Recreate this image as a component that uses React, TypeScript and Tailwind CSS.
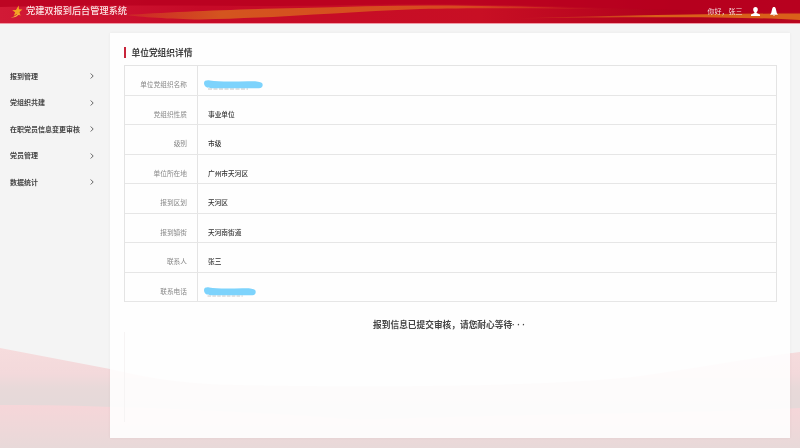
const fontStack = "font-['Liberation_Sans','Noto_Sans_CJK_SC',sans-serif]";

const menus = ['报到管理', '党组织共建', '在职党员信息变更审核', '党员管理', '数据统计'];

const rows = [
  { label: '单位党组织名称', value: '', mask: 59 },
  { label: '党组织性质', value: '事业单位' },
  { label: '级别', value: '市级' },
  { label: '单位所在地', value: '广州市天河区' },
  { label: '报到区划', value: '天河区' },
  { label: '报到镇街', value: '天河南街道' },
  { label: '联系人', value: '张三' },
  { label: '联系电话', value: '', mask: 52 },
];

function HeaderArt() {
  return (
    <svg className="absolute inset-0 h-full w-full" viewBox="0 0 800 23" preserveAspectRatio="none">
      <defs>
        <linearGradient id="band" x1="0" x2="1" y1="0" y2="0">
          <stop offset="0" stopColor="#d11a36" />
          <stop offset="0.25" stopColor="#c60a28" />
          <stop offset="0.6" stopColor="#c80f24" />
          <stop offset="0.85" stopColor="#b0001c" />
          <stop offset="1" stopColor="#b8061f" />
        </linearGradient>
        <linearGradient id="swoosh" x1="0" x2="1" y1="0" y2="0">
          <stop offset="0" stopColor="#d4551f" stopOpacity="0.3" />
          <stop offset="0.2" stopColor="#d4551f" />
          <stop offset="0.7" stopColor="#d9501f" stopOpacity="0.9" />
          <stop offset="1" stopColor="#d9501f" stopOpacity="0" />
        </linearGradient>
        <linearGradient id="swoosh2" x1="0" x2="1" y1="0" y2="0">
          <stop offset="0" stopColor="#d9601a" stopOpacity="0" />
          <stop offset="0.5" stopColor="#d9601a" />
          <stop offset="1" stopColor="#d9601a" />
        </linearGradient>
      </defs>
      <rect width="800" height="23" fill="url(#band)" />
      <path d="M0 0H800V12C700 11 640 9 560 6.500C470 4 400 4 330 5.500C230 7 120 4 0 7Z" fill="#b8001f" opacity="0.8" />
      <path d="M125 15C170 12 240 9 300 8C350 6.500 400 5 450 5.500C510 6 570 8 610 9.500C540 8 470 8 420 9C340 12 280 18 200 19.500C170 19 140 17 125 15Z" fill="url(#swoosh)" />
      <path d="M513 18.500C610 16 710 13.500 800 13.500V20C740 16.500 630 16.500 513 18.500Z" fill="url(#swoosh2)" />
    </svg>
  );
}

function BackgroundArt() {
  return (
    <svg className="absolute inset-x-0 bottom-0 h-[100px] w-full" viewBox="0 0 800 100" preserveAspectRatio="none">
      <defs>
        <linearGradient id="waveTop" gradientUnits="userSpaceOnUse" x1="0" x2="0" y1="0" y2="57">
          <stop offset="0" stopColor="#f6dcdd" />
          <stop offset="0.45" stopColor="#f3d9db" />
          <stop offset="0.7" stopColor="#e8d9d9" />
          <stop offset="1" stopColor="#e5d9d9" />
        </linearGradient>
        <linearGradient id="waveBottom" gradientUnits="userSpaceOnUse" x1="0" x2="0" y1="57" y2="100">
          <stop offset="0" stopColor="#f6d6d9" />
          <stop offset="1" stopColor="#e8d9d9" />
        </linearGradient>
      </defs>
      <path d="M0 0L110 21C150 30 180 36 240 37C380 40 560 38 640 28C700 20 750 10 800 4V100H0Z" fill="url(#waveTop)" />
      <path d="M0 57C60 56 240 62 360 72C500 66 680 66 800 60V100H0Z" fill="url(#waveBottom)" />
    </svg>
  );
}

function Mask({ width }: { width: number }) {
  return (
    <svg className="absolute left-[6px] top-[14px]" width={width} height="11" viewBox="0 0 59 11" preserveAspectRatio="none">
      <path d="M4 9H44" stroke="#c4c4c4" strokeWidth="1" strokeDasharray="4 1.500" />
      <path d="M0 3C0 .5 3 0 6 .500C14 1.800 30 1.500 44 1.200C50 1 56 1.200 58 3C59.500 5 58.500 8 55 8.200C42 8.500 24 8.200 8 8.200C3 8.200 0 6.500 0 3Z" fill="#7dd3fc" />
    </svg>
  );
}

export default function App() {
  return (
    <div className={`relative flex h-[448px] w-[800px] flex-col overflow-hidden bg-[#f4f4f4] blur-[0.4px] ${fontStack}`}>
      <BackgroundArt />

      <header className="relative flex h-[24px] shrink-0 items-center justify-between border-b border-[#ef9aa5] pl-[10px] pr-[22.500px]">
        <HeaderArt />
        <div className="relative flex items-center gap-[3px]">
          <svg width="13" height="13" viewBox="0 0 24 24">
            <path d="M16 1L16.500 8L23 8.500L17.500 13L19.500 20L13.500 16L7 20L9.500 13.500L4 9.500L11 9Z" fill="#f3a323" />
            <path d="M1 23C7 22 12 19 15 15L17 17C13 21 8 24 1 23Z" fill="#f5b93e" />
          </svg>
          <span className="text-[9.200px] font-medium leading-none text-[#fbe4e4]">党建双报到后台管理系统</span>
        </div>
        <div className="relative flex items-center text-white">
          <span className="text-[7px] leading-none text-[#f6dede]">你好，张三</span>
          <svg className="ml-[8px]" width="9" height="9" viewBox="0 0 9 9" fill="currentColor">
            <path d="M4.500 0C6 0 6.800 1 6.800 2.500C6.800 3.800 6.100 4.700 5.600 5.200V5.900L9 7.600V9H0V7.600L3.400 5.900V5.200C2.900 4.700 2.200 3.800 2.200 2.500C2.200 1 3 0 4.500 0Z" />
          </svg>
          <svg className="ml-[10px]" width="8" height="9" viewBox="0 0 8 9" fill="currentColor">
            <path d="M4 0C5 0 5.500 .6 5.800 1.800L6.800 6L8 7.800H0L1.200 6L2.200 1.800C2.500 .6 3 0 4 0Z" />
            <path d="M2.800 8.200H5.200L4 9Z" />
          </svg>
        </div>
      </header>

      <div className="relative flex min-h-0 flex-1">
        <aside className="w-[110px] shrink-0 pl-[10px] pr-[16px] pt-[39px]">
          {menus.map((item) => (
            <div key={item} className="flex h-[26.500px] items-center justify-between text-[7px] leading-none text-[#444444]">
              <span className="font-bold">{item}</span>
              <svg width="4" height="6" viewBox="0 0 4 6" fill="none" stroke="#666666" strokeWidth="1">
                <path d="M0.700 0.500L3.200 3L0.700 5.500" />
              </svg>
            </div>
          ))}
        </aside>

        <main className="mt-[9px] mb-[10px] mr-[10px] flex-1 bg-white/90 pl-[14px] pr-[13.500px] pt-[14px] shadow-[0_0_3px_rgba(0,0,0,0.05)]">
          <h2 className="flex h-[11px] items-center border-l-[2.500px] border-[#c8243a] pl-[5.500px] text-[8.700px] font-bold leading-none text-[#444444]">
            <span className="mt-[1px]">单位党组织详情</span>
          </h2>
          <div className="mt-[7px] border border-b-0 border-[#e4e4e4]">
            {rows.map((row) => (
              <div key={row.label} className="flex h-[29.500px] border-b border-[#e6e6e6]">
                <div className="w-[73px] shrink-0 border-r border-[#e4e4e4] pr-[10px] pt-[15px] text-right text-[6.700px] leading-[8px] text-[#888888]">
                  {row.label}
                </div>
                <div className="relative pl-[10px] pt-[15px] text-[6.700px] font-medium leading-[8px] text-[#333333]">
                  {row.value}
                  {row.mask && <Mask width={row.mask} />}
                </div>
              </div>
            ))}
          </div>
          <p className="mt-[17px] text-center text-[8.700px] font-bold leading-[12px] text-[#444444]">
            报到信息已提交审核，请您耐心等待<span className="tracking-[2.200px]">···</span>
          </p>
          <div className="mt-[1px] h-[90px] border-l border-[#f6f4f4]" />
        </main>
      </div>
    </div>
  );
}
